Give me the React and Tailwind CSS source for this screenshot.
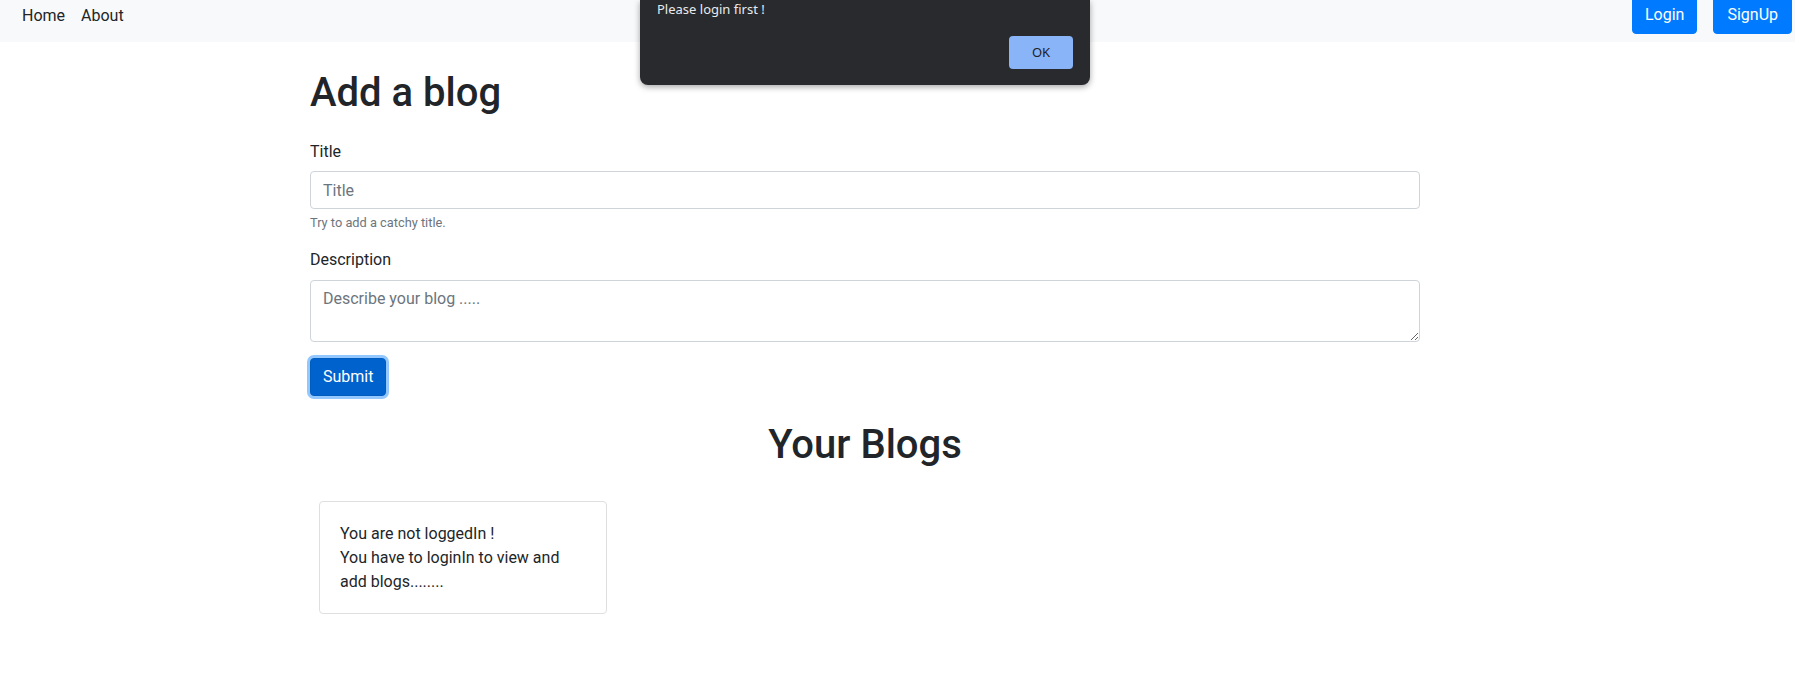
import React from "react";

const Navbar = () => {
  return (
    <nav className="h-[42px] bg-[#f8f9fa] flex justify-between items-start overflow-hidden">
      <ul className="flex pl-[14px] mt-[-4px]">
        {["Home", "About"].map((label) => (
          <li key={label}>
            <a href="#" className="block px-2 py-2 text-base leading-6 text-[#212529]">
              {label}
            </a>
          </li>
        ))}
      </ul>
      <div className="flex gap-4 pr-[3px] mt-[-4px]">
        <button className="h-[38px] px-3 border border-[#007bff] bg-[#007bff] text-white text-base leading-6 rounded">
          Login
        </button>
        <button className="h-[38px] px-[13px] border border-[#007bff] bg-[#007bff] text-white text-base leading-6 rounded">
          SignUp
        </button>
      </div>
    </nav>
  );
};

const AlertDialog = () => {
  return (
    <div className="absolute top-0 left-[640px] w-[450px] h-[85px] bg-[#292a2d] rounded-b-lg shadow-[0_2px_6px_rgba(0,0,0,0.35)] flex flex-col font-['Noto_Sans',sans-serif]">
      <p className="pl-[17px] text-[13px] leading-[18px] text-[#e8eaed]">Please login first !</p>
      <button className="self-end mt-[18px] mr-[17px] w-[64px] h-[33px] rounded bg-[#8ab4f8] text-[13px] text-[#202124]">
        OK
      </button>
    </div>
  );
};

export default function App() {
  return (
    <div className="relative min-h-screen bg-white font-['Roboto',sans-serif] text-[#212529]">
      <Navbar />
      <AlertDialog />

      <main className="ml-[310px] w-[1110px]">
        <h1 className="mt-[27px] mb-[23px] text-[40px] leading-[48px] font-medium">Add a blog</h1>

        <form onSubmit={(e) => e.preventDefault()}>
          <div className="mb-4">
            <label className="block mb-[7px] text-base leading-6">Title</label>
            <input
              type="text"
              placeholder="Title"
              className="block w-full h-[38px] px-3 border border-[#ced4da] rounded text-base leading-6 placeholder:text-[#6c757d] outline-none"
            />
            <small className="block mt-1 text-[12.8px] leading-[19.2px] text-[#6c757d]">
              Try to add a catchy title.
            </small>
          </div>

          <div className="mb-4">
            <label className="block mb-2 text-base leading-6">Description</label>
            <textarea
              rows={2}
              placeholder="Describe your blog ....."
              className="block w-full h-[62px] px-3 py-[6px] border border-[#ced4da] rounded text-base leading-6 placeholder:text-[#6c757d] outline-none"
            />
          </div>

          <button
            type="submit"
            className="h-[38px] px-3 border border-[#005cbf] bg-[#0062cc] text-white text-base leading-6 rounded shadow-[0_0_0_3px_rgba(38,143,255,0.5)]"
          >
            Submit
          </button>
        </form>

        <h2 className="mt-[25px] mb-8 text-center text-[40px] leading-[48px] font-medium">Your Blogs</h2>

        <div className="ml-[9px] w-[288px] border border-[#dfdfdf] rounded pt-5 pb-[19px] px-5 text-base leading-6">
          You are not loggedIn !
          <br />
          You have to loginIn to view and add blogs........
        </div>
      </main>
    </div>
  );
}
